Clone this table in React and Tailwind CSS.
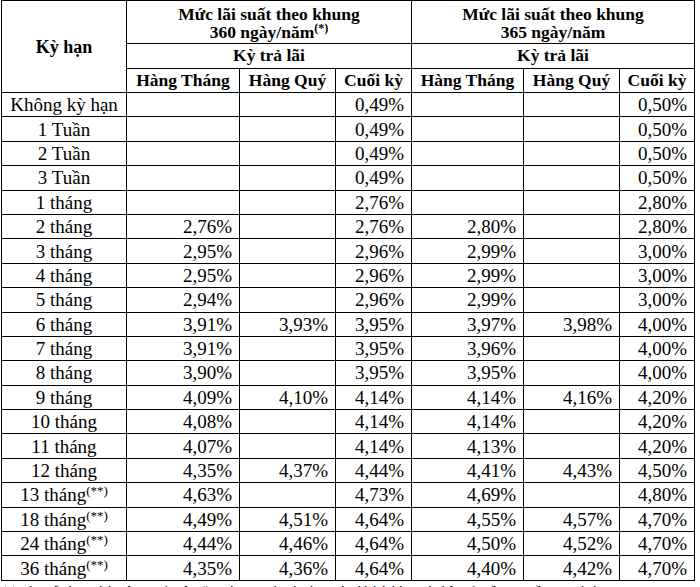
const rows = [
  ['Không kỳ hạn', '', '', '0,49%', '', '', '0,50%'],
  ['1 Tuần', '', '', '0,49%', '', '', '0,50%'],
  ['2 Tuần', '', '', '0,49%', '', '', '0,50%'],
  ['3 Tuần', '', '', '0,49%', '', '', '0,50%'],
  ['1 tháng', '', '', '2,76%', '', '', '2,80%'],
  ['2 tháng', '2,76%', '', '2,76%', '2,80%', '', '2,80%'],
  ['3 tháng', '2,95%', '', '2,96%', '2,99%', '', '3,00%'],
  ['4 tháng', '2,95%', '', '2,96%', '2,99%', '', '3,00%'],
  ['5 tháng', '2,94%', '', '2,96%', '2,99%', '', '3,00%'],
  ['6 tháng', '3,91%', '3,93%', '3,95%', '3,97%', '3,98%', '4,00%'],
  ['7 tháng', '3,91%', '', '3,95%', '3,96%', '', '4,00%'],
  ['8 tháng', '3,90%', '', '3,95%', '3,95%', '', '4,00%'],
  ['9 tháng', '4,09%', '4,10%', '4,14%', '4,14%', '4,16%', '4,20%'],
  ['10 tháng', '4,08%', '', '4,14%', '4,14%', '', '4,20%'],
  ['11 tháng', '4,07%', '', '4,14%', '4,13%', '', '4,20%'],
  ['12 tháng', '4,35%', '4,37%', '4,44%', '4,41%', '4,43%', '4,50%'],
  ['13 tháng', '4,63%', '', '4,73%', '4,69%', '', '4,80%', true],
  ['18 tháng', '4,49%', '4,51%', '4,64%', '4,55%', '4,57%', '4,70%', true],
  ['24 tháng', '4,44%', '4,46%', '4,64%', '4,50%', '4,52%', '4,70%', true],
  ['36 tháng', '4,35%', '4,36%', '4,64%', '4,40%', '4,42%', '4,70%', true],
];

// shared cell look: thin black grid, Times-like text
const cell = 'border border-black px-[7px] leading-none whitespace-nowrap';

export default function App() {
  return (
    <div className="bg-white w-[700px] h-[587px] overflow-hidden text-black font-['Liberation_Serif','Times_New_Roman',serif]">
      <table className="ml-[1px] border-collapse table-fixed w-[693px] text-[19px]">
        <colgroup>
          <col className="w-[125px]" />
          <col className="w-[113px]" />
          <col className="w-[96px]" />
          <col className="w-[76px]" />
          <col className="w-[112px]" />
          <col className="w-[96px]" />
          <col className="w-[75px]" />
        </colgroup>
        <thead className="font-bold text-[17.5px]">
          <tr className="h-[43px]">
            <th rowSpan={3} className={`${cell} text-center text-[18px]`}>Kỳ hạn</th>
            <th colSpan={3} className={`${cell} text-center align-top pt-[5px] leading-[19px]`}>
              Mức lãi suất theo khung
              <br />
              360 ngày/năm<sup className="text-[12px] -top-[6px]">(*)</sup>
            </th>
            <th colSpan={3} className={`${cell} text-center align-top pt-[5px] leading-[19px]`}>
              Mức lãi suất theo khung
              <br />
              365 ngày/năm
            </th>
          </tr>
          <tr className="h-[25px]">
            <th colSpan={3} className={`${cell} text-center`}>Kỳ trả lãi</th>
            <th colSpan={3} className={`${cell} text-center`}>Kỳ trả lãi</th>
          </tr>
          <tr className="h-[24px]">
            <th className={`${cell} px-0 text-center`}>Hàng Tháng</th>
            <th className={`${cell} px-0 text-center`}>Hàng Quý</th>
            <th className={`${cell} px-0 text-center`}>Cuối kỳ</th>
            <th className={`${cell} px-0 text-center`}>Hàng Tháng</th>
            <th className={`${cell} px-0 text-center`}>Hàng Quý</th>
            <th className={`${cell} px-0 text-center`}>Cuối kỳ</th>
          </tr>
        </thead>
        <tbody className="font-normal">
          {rows.map((r) => (
            <tr key={r[0]} className="h-[24.4px]">
              <td className={`${cell} px-0 text-center`}>
                {r[0]}
                {r[7] && <sup className="text-[13px] -top-[6px]">(**)</sup>}
              </td>
              {r.slice(1, 7).map((v, i) => (
                <td key={i} className={`${cell} text-right`}>{v}</td>
              ))}
            </tr>
          ))}
        </tbody>
      </table>
      <p className="mt-[3px] ml-[2px] text-[13px] leading-none whitespace-nowrap">
        (*) Lãi suất được tính trên cơ sở một năm có 360 ngày, áp dụng cho khách hàng cá nhân gửi tiền tại quầy giao dịch.
      </p>
    </div>
  );
}
